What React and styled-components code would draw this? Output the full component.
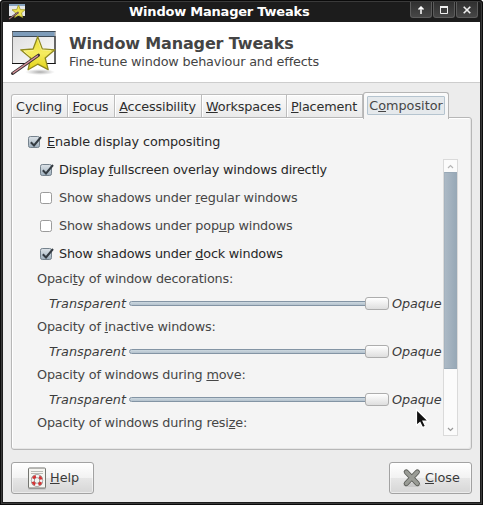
import React from 'react';
import styled, { createGlobalStyle } from 'styled-components';

const Global = createGlobalStyle`
  * { box-sizing: border-box; }
  html, body { margin: 0; padding: 0; background: #fff; }
  body { font-family: "DejaVu Sans", sans-serif; font-size: 13px; line-height: 16px; color: #2e2e2e; }
`;

const Frame = styled.div`
  position: relative;
  width: 483px;
  height: 505px;
  padding: 0 3px 3px;
  display: flex;
  flex-direction: column;
  background: #1c1c1c;
  border-radius: 4px 4px 0 0;
  box-shadow: inset 0 0 0 1px #0a0a0a, inset 0 0 0 2px #3a3a3a;
  overflow: hidden;
`;

const TitleBar = styled.header`
  height: 22px;
  flex: none;
  display: flex;
  align-items: flex-start;
  padding: 2px 2px 0 5px;
`;

const TitleText = styled.div`
  flex: 1;
  padding: 2px 0 0 103px;
  font-weight: bold;
  font-size: 13px;
  line-height: 16px;
  letter-spacing: -0.22px;
  color: #fff;
  white-space: nowrap;
`;

const WindowButtons = styled.div`
  display: flex;
  gap: 1px;
`;

const WindowButton = styled.div`
  width: 22px;
  height: 16px;
  display: flex;
  align-items: center;
  justify-content: center;
  background: linear-gradient(#303030, #464646);
  border: 1px solid #5c5c5c;
  border-top: 0;
  border-radius: 0 0 3px 3px;
`;

const Banner = styled.section`
  height: 61px;
  flex: none;
  display: flex;
  padding: 7px 0 0 7px;
  background: #fff;
  border-bottom: 1px solid #cdcdcd;
`;

const BannerText = styled.div`
  padding: 5px 0 0 11px;
  color: #444;
  white-space: nowrap;
`;

const BannerTitle = styled.h1`
  margin: 0;
  font-size: 16px;
  line-height: 20px;
  font-weight: bold;
  letter-spacing: -0.15px;
`;

const BannerSubtitle = styled.div`
  font-size: 12.8px;
  line-height: 15px;
  letter-spacing: -0.17px;
`;

const Body = styled.main`
  flex: 1;
  display: flex;
  flex-direction: column;
  padding: 9px 8px 8px;
  background: #ececec;
`;

const Tabs = styled.nav`
  height: 26px;
  flex: none;
  display: flex;
  align-items: flex-end;
`;

const Tab = styled.div`
  width: ${p => p.$w}px;
  height: 24px;
  padding: 4px 1px 0 0;
  text-align: center;
  white-space: nowrap;
  font-size: 12.8px;
  letter-spacing: -0.16px;
  background: linear-gradient(#fafafa, #e9e9e9);
  border: 1px solid #bdbdbd;
  border-left-width: ${p => (p.$first ? 1 : 0)}px;
  border-bottom: 0;
  border-radius: ${p => (p.$first ? '3px 0 0 0' : '0')};
  box-shadow: inset 1px 1px 0 #fff;
`;

const ActiveTab = styled.div`
  position: relative;
  z-index: 1;
  width: 86px;
  height: 27px;
  margin-bottom: -1px;
  padding: 3px;
  background: linear-gradient(#fbfbfb, #f4f4f4);
  border: 1px solid #b5b5b5;
  border-bottom: 0;
  border-radius: 3px 3px 0 0;
`;

const FocusRing = styled.div`
  height: 19px;
  line-height: 17px;
  text-align: center;
  white-space: nowrap;
  font-size: 12.8px;
  color: #464646;
  background: #e5e9ec;
  border: 1px solid #b5c4cf;
  border-radius: 1px;
`;

const Panel = styled.section`
  width: 461px;
  height: 333px;
  flex: none;
  margin-top: -1px;
  padding: 16px 13px 12px 16px;
  background: #f4f4f4;
  border: 1px solid #b7b7b7;
  border-radius: 0 3px 3px 3px;
  box-shadow: inset 1px 1px 0 #fff, inset -1px -1px 0 #e6e6e6;
`;

const CheckRow = styled.label`
  height: 28px;
  display: flex;
  align-items: center;
  gap: 5px;
  font-size: 12.8px;
  letter-spacing: ${p => (p.$master ? '-0.08px' : '-0.19px')};
  color: ${p => (p.$dim ? '#464646' : '#282828')};
  white-space: nowrap;
`;

const MasterCheck = styled.div`
  height: 31px;
  margin-top: -6px;
`;

const Scroller = styled.div`
  display: flex;
  height: 277px;
  justify-content: space-between;
  padding-left: 9px;
`;

const Options = styled.div`
  width: 405px;
  height: 277px;
  overflow: hidden;
`;

const Checks = styled.div`
  margin-top: -3px;
  padding-left: 3px;
`;

const Setting = styled.div`
  height: 48px;
`;

const SettingLabel = styled.div`
  height: 24px;
  line-height: 22px;
  font-size: 12.8px;
  letter-spacing: -0.19px;
  color: #464646;
  white-space: nowrap;
`;

const SliderRow = styled.div`
  height: 23px;
  display: flex;
  align-items: center;
  padding-left: 12px;
  font-size: 12.8px;
  font-style: italic;
  color: #3c3c3c;
`;

const SliderStart = styled.span`
  width: 80px;
  flex: none;
`;

const Track = styled.div`
  width: 260px;
  height: 5px;
  flex: none;
  display: flex;
  align-items: center;
  justify-content: flex-end;
  background: linear-gradient(#cdd8e0, #b4c2cd);
  border: 1px solid #8394a4;
  border-radius: 3px;
`;

const Knob = styled.div`
  width: 24px;
  height: 13px;
  flex: none;
  margin-right: -1px;
  background: linear-gradient(#fff, #dedede);
  border: 1px solid #adadad;
  border-radius: 3px;
`;

const SliderEnd = styled.span`
  margin-left: 3px;
  letter-spacing: -0.1px;
`;

const Scrollbar = styled.div`
  width: 15px;
  height: 277px;
  display: flex;
  flex-direction: column;
  align-items: stretch;
  background: #fbfbfb;
  border: 1px solid #dadada;
`;

const ScrollArrow = styled.div`
  height: 12px;
  display: flex;
  align-items: center;
  justify-content: center;
`;

const ScrollThumb = styled.div`
  height: 197px;
  margin-bottom: auto;
  background: linear-gradient(90deg, #acb9c5, #98a9b7);
  border: 1px solid #98a8b6;
  border-left-color: #a5b3bf;
`;

const Actions = styled.footer`
  display: flex;
  justify-content: space-between;
  margin-top: 12px;
`;

const Button = styled.div`
  width: 83px;
  height: 32px;
  display: flex;
  align-items: center;
  gap: ${p => p.$gap}px;
  padding-left: ${p => p.$pad}px;
  font-size: 12.8px;
  color: #3a3a3a;
  background: linear-gradient(#fff, #f2f2f2 50%, #e6e6e6 51%, #d6d6d6);
  border: 1px solid #a2a2a2;
  border-radius: 3px;
  box-shadow: inset 0 0 0 1px rgba(255, 255, 255, .5);
`;

const Key = styled.span`
  text-decoration: underline;
  text-decoration-thickness: 1px;
  text-underline-offset: 1px;
  text-decoration-skip-ink: none;
`;

const Pointer = styled.svg`
  position: absolute;
  left: 415px;
  top: 408px;
`;

/* An underscore marks the mnemonic letter. */
const Label = ({ text }) => {
  const i = text.indexOf('_');
  if (i < 0) return <span>{text}</span>;
  return <span>{text.slice(0, i)}<Key>{text[i + 1]}</Key>{text.slice(i + 2)}</span>;
};

const WandIcon = ({ size }) => (
  <svg width={size} height={size} viewBox="0 0 48 48">
    <defs>
      <linearGradient id="pane" x1="0" y1="0" x2="1" y2="1">
        <stop offset="0" stopColor="#dcdcdc" /><stop offset="1" stopColor="#fff" />
      </linearGradient>
      <linearGradient id="star" x1="0" y1="0" x2="0" y2="1">
        <stop offset="0" stopColor="#e9dd2c" /><stop offset=".5" stopColor="#f5ec62" /><stop offset="1" stopColor="#e3d414" />
      </linearGradient>
      <radialGradient id="shade"><stop offset="0" stopColor="#888" stopOpacity=".7" /><stop offset="1" stopColor="#999" stopOpacity="0" /></radialGradient>
    </defs>
    <ellipse cx="30" cy="43" rx="15" ry="3" fill="url(#shade)" />
    <rect x="2.5" y="2.5" width="42.500" height="32" fill="url(#pane)" stroke="#777" />
    <path d="M2 34.500h43.500M45 7v28" stroke="#151515" />
    <rect x="3" y="3" width="41.500" height="4" fill="#7d9cba" />
    <path d="M2 2.500h43.500M3 7.500h42" stroke="#3e4b57" />
    <path d="M27.700 7.700l4.600 12.300 12.600.8-9.700 8.200 3 11.700-10.500-5.500-9.600 5.500 2.500-11.700-9.900-8.200 12.400-.8z" fill="url(#star)" stroke="#8f8920" strokeWidth="1.300" strokeLinejoin="round" />
    <path d="M27.700 10.500l3.800 10.300 9.500.8M23.500 21.500l-9.500.7 6 5" fill="none" stroke="#fbf6a5" strokeWidth=".7" />
    <path d="M2.500 44.500l26-18.300" stroke="#3a3234" strokeWidth="3" strokeLinecap="round" />
    <path d="M2.700 44.200l25.300-17.700" stroke="#d9949c" strokeWidth="1.400" />
  </svg>
);

const SmallWandIcon = () => (
  <svg width="18" height="18" viewBox="0 0 18 18">
    <rect x="1" y="2" width="16" height="12" fill="#e6e8ea" />
    <rect x="1" y="2" width="16" height="2" fill="#86a2bd" />
    <path d="M10.500 3l1.800 4.600 4.700.2-3.500 3.100 1.200 4.600-4.200-2.200-3.800 2.200 1-4.600L4 7.800l4.700-.2z" fill="#efe450" stroke="#a19a2c" strokeWidth=".8" strokeLinejoin="round" />
    <path d="M1 17l9.500-6.800" stroke="#3a3234" strokeWidth="1.800" />
    <path d="M1 17l9.500-6.800" stroke="#c98b92" strokeWidth=".8" />
  </svg>
);

const CheckBox = ({ checked }) => (
  <svg width="14" height="14" viewBox="0 0 14 14">
    <defs>
      <linearGradient id="tick" x1="0" y1="0" x2="0" y2="1">
        <stop offset="0" stopColor="#dde3e8" /><stop offset="1" stopColor="#9eafbd" />
      </linearGradient>
    </defs>
    <rect x=".5" y="1.500" width="11" height="11" rx="1.800" fill={checked ? 'url(#tick)' : '#fff'} stroke={checked ? '#75828d' : '#9b9b9b'} />
    {checked && <path d="M2.800 7.200l3.200 3.300L13 2" fill="none" stroke="#343b42" strokeWidth="2" />}
  </svg>
);

const HelpIcon = () => (
  <svg width="20" height="23" viewBox="0 0 20 23">
    <rect x="1" y="20" width="18" height="2.500" rx="1" fill="#999" opacity=".5" />
    <rect x="1.500" y="1" width="17" height="20" rx="1" fill="#f5f5f1" stroke="#747570" />
    <path d="M4 4.500h12M4 6.500h12" stroke="#b9bbb5" />
    <circle cx="10" cy="13.500" r="4.300" fill="none" stroke="#777" strokeWidth="3.800" />
    <circle cx="10" cy="13.500" r="4.300" fill="none" stroke="#f4f4f4" strokeWidth="2.700" />
    <circle cx="10" cy="13.500" r="4.300" fill="none" stroke="#d23434" strokeWidth="2.700" strokeDasharray="3.380 3.380" strokeDashoffset="5.060" />
  </svg>
);

const CloseIcon = () => (
  <svg width="20" height="20" viewBox="0 0 20 20">
    <ellipse cx="10" cy="17" rx="9" ry="2" fill="#999" opacity=".3" />
    <path d="M4.300 4l11 11.500M15.300 4l-11 11.500" stroke="#5b5d58" strokeWidth="5.200" strokeLinecap="round" />
    <path d="M4.300 4l11 11.500M15.300 4l-11 11.500" stroke="#9a9c96" strokeWidth="3.400" strokeLinecap="round" />
  </svg>
);

const checks = [
  { text: 'Display _fullscreen overlay windows directly', on: true },
  { text: 'Show shadows under _regular windows', on: false },
  { text: 'Show shadows under pop_up windows', on: false },
  { text: 'Show shadows under _dock windows', on: true },
];

const sliders = ['Opaci_ty of window decorations:', 'Opacity of _inactive windows:', 'Opacity of windows during _move:'];

const tabs = [['Cycling', 57], ['_Focus', 47], ['_Accessibility', 87], ['_Workspaces', 85], ['_Placement', 76]];

export default function App() {
  return (
    <>
      <Global />
      <Frame>
        <TitleBar>
          <SmallWandIcon />
          <TitleText>Window Manager Tweaks</TitleText>
          <WindowButtons>
            <WindowButton>
              <svg width="8" height="8" viewBox="0 0 8 8"><path d="M4 8V1M1.500 3.500L4 1l2.500 2.500" fill="none" stroke="#fff" strokeWidth="1.500" /></svg>
            </WindowButton>
            <WindowButton>
              <svg width="8" height="8" viewBox="0 0 8 8"><path d="M.5 1v6.500h7V1" fill="none" stroke="#eee" /><path d="M0 1h8" stroke="#eee" strokeWidth="2" /></svg>
            </WindowButton>
            <WindowButton>
              <svg width="8" height="8" viewBox="0 0 8 8"><path d="M.7.7l6.600 6.600M7.300.7L.7 7.300" stroke="#eee" strokeWidth="1.600" /></svg>
            </WindowButton>
          </WindowButtons>
        </TitleBar>
        <Banner>
          <WandIcon size={48} />
          <BannerText>
            <BannerTitle>Window Manager Tweaks</BannerTitle>
            <BannerSubtitle>Fine-tune window behaviour and effects</BannerSubtitle>
          </BannerText>
        </Banner>
        <Body>
          <Tabs>
            {tabs.map(([text, w], i) => <Tab key={text} $w={w} $first={i === 0}><Label text={text} /></Tab>)}
            <ActiveTab><FocusRing><Label text="C_ompositor" /></FocusRing></ActiveTab>
          </Tabs>
          <Panel>
            <MasterCheck>
              <CheckRow $master><CheckBox checked /><Label text="_Enable display compositing" /></CheckRow>
            </MasterCheck>
            <Scroller>
              <Options>
                <Checks>
                  {checks.map(c => (
                    <CheckRow key={c.text} $dim={!c.on}><CheckBox checked={c.on} /><Label text={c.text} /></CheckRow>
                  ))}
                </Checks>
                {sliders.map(text => (
                  <Setting key={text}>
                    <SettingLabel><Label text={text} /></SettingLabel>
                    <SliderRow>
                      <SliderStart>Transparent</SliderStart>
                      <Track><Knob /></Track>
                      <SliderEnd>Opaque</SliderEnd>
                    </SliderRow>
                  </Setting>
                ))}
                <SettingLabel><Label text="Opacity of windows during resi_ze:" /></SettingLabel>
              </Options>
              <Scrollbar>
                <ScrollArrow><svg width="7" height="5" viewBox="0 0 7 5"><path d="M1 4l2.500-2.500L6 4" fill="none" stroke="#b5b5b5" strokeWidth="1.200" /></svg></ScrollArrow>
                <ScrollThumb />
                <ScrollArrow><svg width="7" height="5" viewBox="0 0 7 5"><path d="M1 1l2.500 2.500L6 1" fill="none" stroke="#999" strokeWidth="1.200" /></svg></ScrollArrow>
              </Scrollbar>
            </Scroller>
          </Panel>
          <Actions>
            <Button $pad={15} $gap={3}><HelpIcon /><Label text="_Help" /></Button>
            <Button $pad={12} $gap={3}><CloseIcon /><Label text="_Close" /></Button>
          </Actions>
        </Body>
        <Pointer width="16" height="21" viewBox="0 0 16 21">
          <path d="M1.500 1.500v16l3.500-3 2.500 5 3-1.300-2.500-5.200h5.200z" fill="#111" stroke="#fff" strokeWidth="1.200" />
        </Pointer>
      </Frame>
    </>
  );
}
